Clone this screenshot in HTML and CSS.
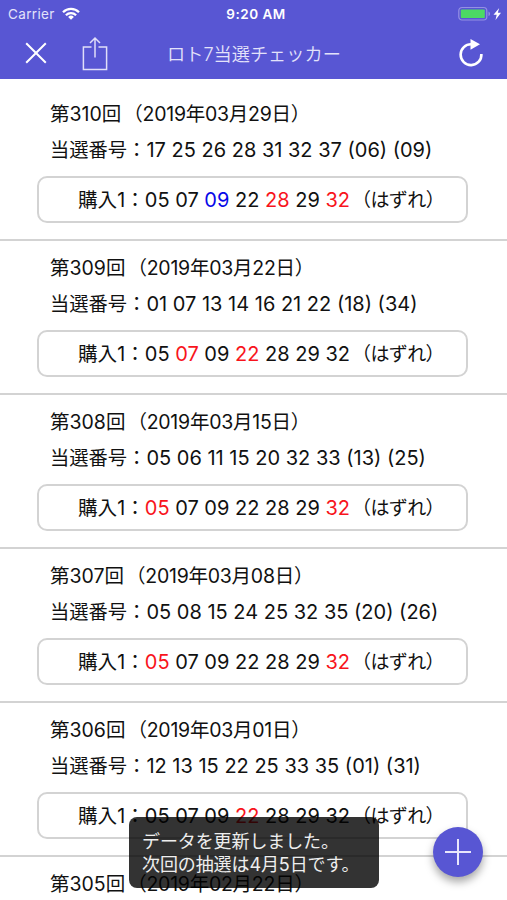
FILE: index.html
```html
<!DOCTYPE html>
<html lang="ja">
<head>
<meta charset="utf-8">
<title>ロト7当選チェッカー</title>
<link rel="stylesheet" href="styles.css">
</head>
<body>
<div class="app">
  <header class="header">
    <div class="status">
      <div class="status-left">
        <span class="carrier">Carrier</span>
        <svg class="wifi" width="18" height="13" viewBox="0 0 18 13"><g fill="none" stroke="#fff" stroke-width="2.300"><path d="M1 5.200a11.400 11.400 0 0 1 16 0"/><path d="M3.900 8.300a7.300 7.300 0 0 1 10.200 0"/></g><path d="M6.100 10a4.100 4.100 0 0 1 5.800 0L9 12.800z" fill="#fff"/></svg>
      </div>
      <span class="clock">9:20 AM</span>
      <div class="status-right">
        <svg width="44" height="16" viewBox="0 0 44 16"><rect x=".8" y="1.500" width="28" height="12.500" rx="3.200" fill="none" stroke="#9490e4" stroke-width="1.200"/><rect x="2.800" y="3.400" width="24" height="8.700" rx="1.200" fill="#4cd964"/><path d="M30.500 5.500c2 .8 2 3.800 0 4.600z" fill="#9490e4"/><path d="M41.200 2L35.500 8.700h3.200L37.500 14l5.500-7.200h-3.200z" fill="#fff"/></svg>
      </div>
    </div>
    <nav class="nav">
      <svg class="icon-close" width="22" height="22" viewBox="0 0 22 22"><path d="M1.200 1.200l19.600 19.600M20.800 1.200L1.200 20.800" stroke="#fff" stroke-width="2" fill="none"/></svg>
      <svg class="icon-share" width="26" height="35" viewBox="0 0 26 35"><path d="M9.500 11H1.400v22.500h23.200V11h-8.100M13 21.500V2M8 7l5-5 5 5" stroke="#e0def9" stroke-width="1.500" fill="none"/></svg>
      <h1 class="title">ロト7当選チェッカー</h1>
      <svg class="icon-reload" width="26" height="28" viewBox="0 0 26 28"><path d="M13.500 5.300A10.400 10.400 0 1 0 23.400 15" stroke="#fff" stroke-width="2.600" fill="none"/><path d="M12.500 0l9.500 5.300-9.500 5.500z" fill="#fff"/></svg>
    </nav>
  </header>
  <main class="list">
    <section class="draw">
      <h2 class="round">第310回<span class="date">（2019年03月29日）</span></h2>
      <p class="result"><span class="label">当選番号：</span>17 25 26 28 31 32 37 (06) (09)</p>
      <div class="ticket"><span class="buy">購入1：</span><span class="nums">05 07 <b class="bonus">09</b> 22 <b class="hit">28</b> 29 <b class="hit">32</b></span><span class="grade">（はずれ）</span></div>
    </section>
    <section class="draw">
      <h2 class="round">第309回<span class="date">（2019年03月22日）</span></h2>
      <p class="result"><span class="label">当選番号：</span>01 07 13 14 16 21 22 (18) (34)</p>
      <div class="ticket"><span class="buy">購入1：</span><span class="nums">05 <b class="hit">07</b> 09 <b class="hit">22</b> 28 29 32</span><span class="grade">（はずれ）</span></div>
    </section>
    <section class="draw">
      <h2 class="round">第308回<span class="date">（2019年03月15日）</span></h2>
      <p class="result"><span class="label">当選番号：</span>05 06 11 15 20 32 33 (13) (25)</p>
      <div class="ticket"><span class="buy">購入1：</span><span class="nums"><b class="hit">05</b> 07 09 22 28 29 <b class="hit">32</b></span><span class="grade">（はずれ）</span></div>
    </section>
    <section class="draw">
      <h2 class="round">第307回<span class="date">（2019年03月08日）</span></h2>
      <p class="result"><span class="label">当選番号：</span>05 08 15 24 25 32 35 (20) (26)</p>
      <div class="ticket"><span class="buy">購入1：</span><span class="nums"><b class="hit">05</b> 07 09 22 28 29 <b class="hit">32</b></span><span class="grade">（はずれ）</span></div>
    </section>
    <section class="draw">
      <h2 class="round">第306回<span class="date">（2019年03月01日）</span></h2>
      <p class="result"><span class="label">当選番号：</span>12 13 15 22 25 33 35 (01) (31)</p>
      <div class="ticket"><span class="buy">購入1：</span><span class="nums">05 07 09 <b class="hit">22</b> 28 29 32</span><span class="grade">（はずれ）</span></div>
    </section>
    <section class="draw">
      <h2 class="round">第305回<span class="date">（2019年02月22日）</span></h2>
    </section>
  </main>
  <div class="toast">データを更新しました。<br>次回の抽選は4月5日です。</div>
  <button class="add" aria-label="追加"><svg width="26" height="26" viewBox="0 0 26 26"><path d="M13 0v26M0 13h26" stroke="#e8e6fb" stroke-width="2"/></svg></button>
</div>
</body>
</html>
```

FILE: styles.css
```css
* { box-sizing: border-box; margin: 0; padding: 0; }
body {
  width: 507px;
  height: 900px;
  overflow: hidden;
  background: #fff;
  color: #111;
  font-family: Inter, "Noto Sans CJK JP", sans-serif;
}
.app { position: relative; height: 900px; overflow: hidden; }
.header { height: 79px; background: #5856d3; color: #fff; }
.status {
  display: grid;
  grid-template-columns: 1fr auto 1fr;
  align-items: center;
  height: 27px;
  padding: 0 6px 0 8px;
  font-size: 13px;
}
.status-left { display: flex; align-items: center; gap: 7px; }
.carrier { color: #e3e2fa; font-size: 13.5px; letter-spacing: .35px; }
.clock { padding-left: 3px; font-weight: 600; letter-spacing: .5px; font-size: 13.5px; }
.status-right { display: flex; justify-content: flex-end; margin-right: -1px; }
.nav { display: flex; align-items: center; height: 52px; padding: 0 23px 0 25px; }
.icon-share { margin-left: 35px; }
.title {
  margin-left: 59px;
  font-size: 18.200px;
  font-weight: 350;
  color: #e3e2fa;
  white-space: nowrap;
}
.icon-reload { margin-left: auto; }
.list { padding-top: 8px; }
.draw { height: 154px; padding: 9px 39px 0 37px; border-bottom: 2px solid #d3d3d3; }
.round, .result {
  height: 36px;
  line-height: 36px;
  padding-left: 13px;
  font-size: 20px;
  font-weight: 400;
  white-space: nowrap;
}
.round { font-size: 19.500px; line-height: 37px; }
.date { margin-left: 2px; letter-spacing: -.25px; }
.label { font-size: 19.300px; }
.ticket {
  height: 47px;
  margin-top: 8px;
  padding-left: 39px;
  border: 2px solid #d3d3d3;
  border-radius: 10px;
  line-height: 44px;
  font-size: 20px;
  font-weight: 400;
  white-space: nowrap;
}
.buy { font-size: 19.600px; }
.grade { margin-left: 2px; font-size: 19px; letter-spacing: -.6px; }
.ticket b { font-weight: inherit; }
.hit { color: #f8141c; }
.bonus { color: #0808e8; }
.toast {
  position: absolute;
  left: 129px;
  top: 817px;
  width: 250px;
  height: 71px;
  padding: 13px 13px 0;
  border-radius: 8px;
  background: rgba(0, 0, 0, .8);
  color: #eee;
  font-size: 18px;
  font-weight: 400;
  line-height: 23px;
  letter-spacing: -.1px;
  white-space: nowrap;
}
.add {
  position: absolute;
  left: 433px;
  top: 827px;
  display: grid;
  place-items: center;
  width: 50px;
  height: 50px;
  border: 0;
  border-radius: 50%;
  background: #5856d3;
  box-shadow: 0 5px 9px rgba(0, 0, 0, .35);
}
```
